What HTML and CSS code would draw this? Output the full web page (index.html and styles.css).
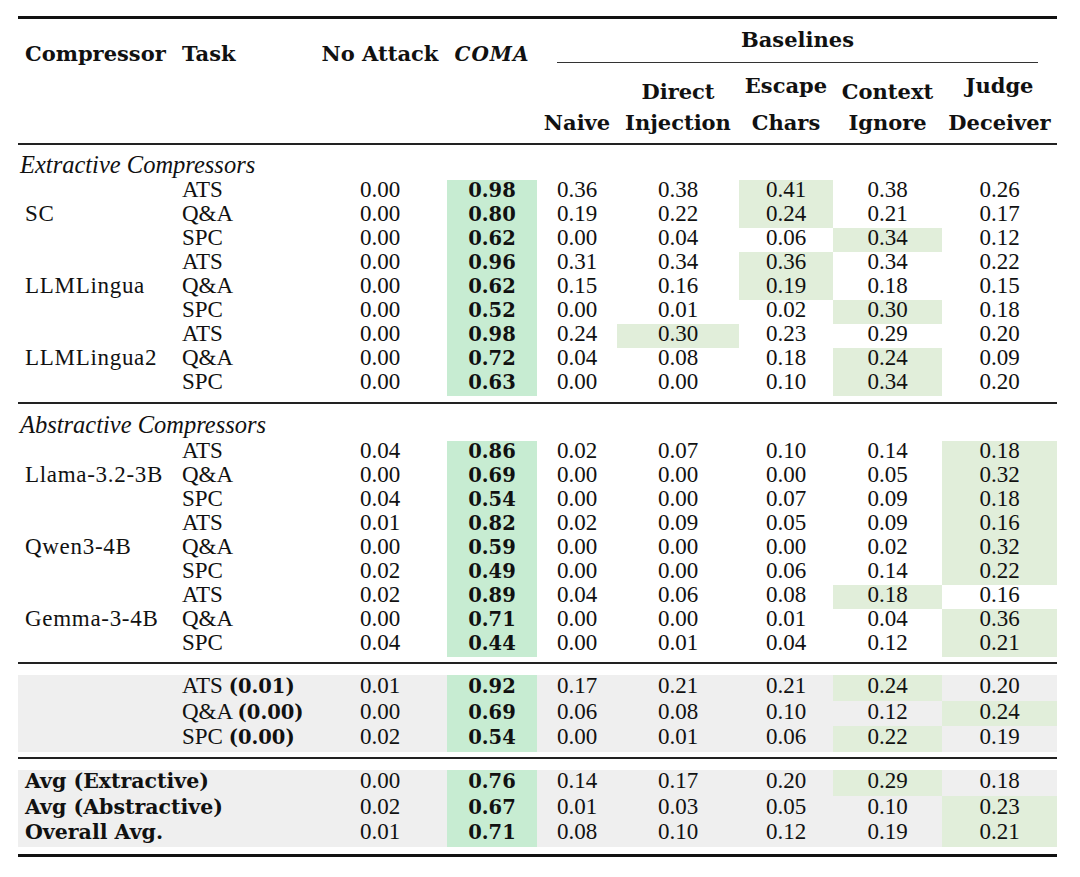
FILE: index.html
```html
<!DOCTYPE html>
<html lang="en">
<head>
<meta charset="utf-8">
<title>COMA results</title>
<link rel="stylesheet" href="styles.css">
</head>
<body>
<table class="results">
  <colgroup>
    <col class="c-comp"><col class="c-task"><col class="c-noatt"><col class="c-coma"><col class="c-naive"><col class="c-direct"><col class="c-escape"><col class="c-context"><col class="c-judge">
  </colgroup>
  <thead>
    <tr class="hrow-a">
      <th rowspan="2" class="span left">Compressor</th>
      <th rowspan="2" class="span left">Task</th>
      <th rowspan="2" class="span">No Attack</th>
      <th rowspan="2" class="span coma-h">COMA</th>
      <th colspan="5" class="base"><div class="cmid">Baselines</div></th>
    </tr>
    <tr class="hrow-b">
      <th>Naive</th>
      <th><span class="l1">Direct</span>Injection</th>
      <th><span class="l1 up">Escape</span>Chars</th>
      <th><span class="l1">Context</span>Ignore</th>
      <th><span class="l1 up">Judge</span>Deceiver</th>
    </tr>
  </thead>
  <tbody>
    <tr class="label first"><td colspan="9">Extractive Compressors</td></tr>
    <tr class="row"><td rowspan="3" class="comp">SC</td><td class="task">ATS</td><td>0.00</td><td class="best">0.98</td><td>0.36</td><td>0.38</td><td class="hi">0.41</td><td>0.38</td><td>0.26</td></tr>
    <tr class="row"><td class="task">Q&amp;A</td><td>0.00</td><td class="best">0.80</td><td>0.19</td><td>0.22</td><td class="hi">0.24</td><td>0.21</td><td>0.17</td></tr>
    <tr class="row"><td class="task">SPC</td><td>0.00</td><td class="best">0.62</td><td>0.00</td><td>0.04</td><td>0.06</td><td class="hi">0.34</td><td>0.12</td></tr>
    <tr class="row"><td rowspan="3" class="comp">LLMLingua</td><td class="task">ATS</td><td>0.00</td><td class="best">0.96</td><td>0.31</td><td>0.34</td><td class="hi">0.36</td><td>0.34</td><td>0.22</td></tr>
    <tr class="row"><td class="task">Q&amp;A</td><td>0.00</td><td class="best">0.62</td><td>0.15</td><td>0.16</td><td class="hi">0.19</td><td>0.18</td><td>0.15</td></tr>
    <tr class="row"><td class="task">SPC</td><td>0.00</td><td class="best">0.52</td><td>0.00</td><td>0.01</td><td>0.02</td><td class="hi">0.30</td><td>0.18</td></tr>
    <tr class="row"><td rowspan="3" class="comp">LLMLingua2</td><td class="task">ATS</td><td>0.00</td><td class="best">0.98</td><td>0.24</td><td class="hi">0.30</td><td>0.23</td><td>0.29</td><td>0.20</td></tr>
    <tr class="row"><td class="task">Q&amp;A</td><td>0.00</td><td class="best">0.72</td><td>0.04</td><td>0.08</td><td>0.18</td><td class="hi">0.24</td><td>0.09</td></tr>
    <tr class="row"><td class="task">SPC</td><td>0.00</td><td class="best">0.63</td><td>0.00</td><td>0.00</td><td>0.10</td><td class="hi">0.34</td><td>0.20</td></tr>
    <tr class="sep s1"><td colspan="9"></td></tr>

    <tr class="label second"><td colspan="9">Abstractive Compressors</td></tr>
    <tr class="row"><td rowspan="3" class="comp">Llama-3.2-3B</td><td class="task">ATS</td><td>0.04</td><td class="best">0.86</td><td>0.02</td><td>0.07</td><td>0.10</td><td>0.14</td><td class="hi">0.18</td></tr>
    <tr class="row"><td class="task">Q&amp;A</td><td>0.00</td><td class="best">0.69</td><td>0.00</td><td>0.00</td><td>0.00</td><td>0.05</td><td class="hi">0.32</td></tr>
    <tr class="row"><td class="task">SPC</td><td>0.04</td><td class="best">0.54</td><td>0.00</td><td>0.00</td><td>0.07</td><td>0.09</td><td class="hi">0.18</td></tr>
    <tr class="row"><td rowspan="3" class="comp">Qwen3-4B</td><td class="task">ATS</td><td>0.01</td><td class="best">0.82</td><td>0.02</td><td>0.09</td><td>0.05</td><td>0.09</td><td class="hi">0.16</td></tr>
    <tr class="row"><td class="task">Q&amp;A</td><td>0.00</td><td class="best">0.59</td><td>0.00</td><td>0.00</td><td>0.00</td><td>0.02</td><td class="hi">0.32</td></tr>
    <tr class="row"><td class="task">SPC</td><td>0.02</td><td class="best">0.49</td><td>0.00</td><td>0.00</td><td>0.06</td><td>0.14</td><td class="hi">0.22</td></tr>
    <tr class="row"><td rowspan="3" class="comp">Gemma-3-4B</td><td class="task">ATS</td><td>0.02</td><td class="best">0.89</td><td>0.04</td><td>0.06</td><td>0.08</td><td class="hi">0.18</td><td>0.16</td></tr>
    <tr class="row"><td class="task">Q&amp;A</td><td>0.00</td><td class="best">0.71</td><td>0.00</td><td>0.00</td><td>0.01</td><td>0.04</td><td class="hi">0.36</td></tr>
    <tr class="row"><td class="task">SPC</td><td>0.04</td><td class="best">0.44</td><td>0.00</td><td>0.01</td><td>0.04</td><td>0.12</td><td class="hi">0.21</td></tr>
    <tr class="sep s2"><td colspan="9"></td></tr>
    <tr class="gap"><td colspan="9"></td></tr>

    <tr class="row avg"><td class="comp"></td><td class="task">ATS <b class="bnum">(0.01)</b></td><td>0.01</td><td class="best">0.92</td><td>0.17</td><td>0.21</td><td>0.21</td><td class="hi">0.24</td><td>0.20</td></tr>
    <tr class="row avg"><td class="comp"></td><td class="task">Q&amp;A <b class="bnum">(0.00)</b></td><td>0.00</td><td class="best">0.69</td><td>0.06</td><td>0.08</td><td>0.10</td><td>0.12</td><td class="hi">0.24</td></tr>
    <tr class="row avg"><td class="comp"></td><td class="task">SPC <b class="bnum">(0.00)</b></td><td>0.02</td><td class="best">0.54</td><td>0.00</td><td>0.01</td><td>0.06</td><td class="hi">0.22</td><td>0.19</td></tr>
    <tr class="sep s3"><td colspan="9"></td></tr>
    <tr class="gap"><td colspan="9"></td></tr>

    <tr class="row avg"><td colspan="2" class="avg-label">Avg (Extractive)</td><td>0.00</td><td class="best">0.76</td><td>0.14</td><td>0.17</td><td>0.20</td><td class="hi">0.29</td><td>0.18</td></tr>
    <tr class="row avg"><td colspan="2" class="avg-label">Avg (Abstractive)</td><td>0.02</td><td class="best">0.67</td><td>0.01</td><td>0.03</td><td>0.05</td><td>0.10</td><td class="hi">0.23</td></tr>
    <tr class="row avg"><td colspan="2" class="avg-label">Overall Avg.</td><td>0.01</td><td class="best">0.71</td><td>0.08</td><td>0.10</td><td>0.12</td><td>0.19</td><td class="hi">0.21</td></tr>
    <tr class="sep bottom"><td colspan="9"></td></tr>
  </tbody>
</table>
</body>
</html>
```

FILE: styles.css
```css
body {
  margin: 0;
  background: #ffffff;
  color: #111111;
}

.results {
  margin: 16px 0 0 18px;
  width: 1039px;
  table-layout: fixed;
  border-collapse: separate;
  border-spacing: 0;
  font-family: "Liberation Serif", "Times New Roman", serif;
  font-size: 23px;
  color: #111111;
}

.c-comp { width: 157px; }
.c-task { width: 138px; }
.c-noatt { width: 134px; }
.c-coma { width: 90px; }
.c-naive { width: 80px; }
.c-direct { width: 122px; }
.c-escape { width: 94px; }
.c-context { width: 109px; }
.c-judge { width: 115px; }

/* ---------- header ---------- */
.results th {
  font-family: "DejaVu Serif", "Liberation Serif", serif;
  font-weight: 700;
  font-size: 21px;
  padding: 0;
  text-align: center;
  white-space: nowrap;
}

.results th.span {
  border-top: 3px solid #111;
  border-bottom: 2px solid #222;
  vertical-align: top;
  line-height: 30px;
  padding-top: 20px;
}

.results th.left {
  text-align: left;
  padding-left: 7px;
}

.results th.coma-h {
  font-style: italic;
  font-size: 20px;
  letter-spacing: 1px;
}

.results th.base {
  border-top: 3px solid #111;
  vertical-align: top;
  padding-top: 6px;
}

.cmid {
  margin: 0 19px 0 20px;
  line-height: 30px;
  padding-bottom: 7px;
  border-bottom: 1px solid #333;
}

.hrow-b {
  height: 82px;
}

.hrow-b th {
  vertical-align: bottom;
  line-height: 31px;
  padding-bottom: 5px;
  border-bottom: 2px solid #222;
}

.l1 {
  display: block;
}

.l1.up {
  margin-bottom: 6px;
}

/* ---------- body ---------- */
.results td {
  padding: 0;
  text-align: center;
  white-space: nowrap;
}

.label td {
  font-style: italic;
  font-size: 24.5px;
  line-height: 24px;
  text-align: left;
  vertical-align: top;
  padding: 8px 0 3px 2px;
}

.label.second td {
  padding: 8.5px 0 4.5px 2px;
}

.row {
  height: 24px;
}

.row td {
  line-height: 20px;
  vertical-align: top;
}

.row td.comp {
  text-align: left;
  padding-left: 7px;
  vertical-align: middle;
  padding-bottom: 4px;
  letter-spacing: 0.7px;
}

.row td.task {
  text-align: left;
  padding-left: 7px;
}

.bnum {
  font-family: "DejaVu Serif", serif;
  font-weight: 700;
  font-size: 19.5px;
}

.row td.best {
  font-family: "DejaVu Serif", serif;
  font-weight: 700;
  font-size: 19.5px;
  padding-top: 1px;
}

.avg-label {
  font-family: "DejaVu Serif", serif;
  font-weight: 700;
  font-size: 20.5px;
}

.row.avg {
  height: 25.5px;
}

.row.avg td {
  background: #efefef;
  padding-top: 1px;
}

.row.avg td.best {
  padding-top: 2px;
}

.row.avg td.avg-label {
  text-align: left;
  padding-left: 7px;
}

.results td.best,
.results .row.avg td.best {
  background: #c7ecd2;
}

.results td.hi,
.results .row.avg td.hi {
  background: #e1eeda;
}

.sep td {
  box-sizing: content-box;
  height: 0;
  padding: 0;
  border-bottom: 2px solid #222;
}

.sep.s1 td {
  height: 6px;
}

.sep.s2 td {
  height: 5px;
}

.sep.s3 td {
  height: 5.5px;
}

.sep.bottom td {
  height: 7px;
  border-bottom: 3px solid #111;
}

.gap td {
  box-sizing: content-box;
  height: 11px;
  padding: 0;
}
```
